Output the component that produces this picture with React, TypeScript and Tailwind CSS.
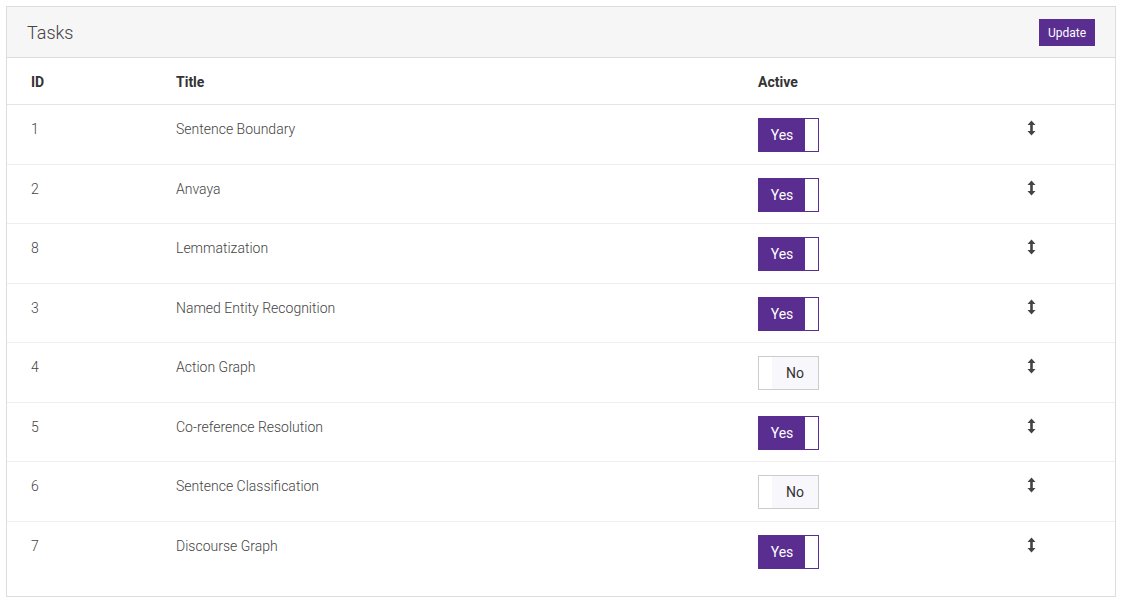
import { useState } from 'react';

const initialTasks = [
  { id: 1, title: 'Sentence Boundary', active: true },
  { id: 2, title: 'Anvaya', active: true },
  { id: 8, title: 'Lemmatization', active: true },
  { id: 3, title: 'Named Entity Recognition', active: true },
  { id: 4, title: 'Action Graph', active: false },
  { id: 5, title: 'Co-reference Resolution', active: true },
  { id: 6, title: 'Sentence Classification', active: false },
  { id: 7, title: 'Discourse Graph', active: true },
];

const ArrowsV = () => (
  <svg width="9" height="16" viewBox="0 0 9 16" className="text-[#444]">
    <path d="M4.5 0.5 L8.5 5 L5.8 5 L5.8 11 L8.5 11 L4.5 15.5 L0.5 11 L3.2 11 L3.2 5 L0.5 5 Z" fill="currentColor" />
  </svg>
);

const Toggle = ({ on, onClick }: { on: boolean; onClick: () => void }) =>
  on ? (
    <button
      onClick={onClick}
      className="flex h-[34px] w-[61px] border border-[#5a2d91] bg-[#5a2d91]"
    >
      <span className="flex h-full w-[46px] items-center justify-center pt-[1px] text-[14px] font-normal text-white">Yes</span>
      <span className="h-full flex-1 bg-white" />
    </button>
  ) : (
    <button
      onClick={onClick}
      className="flex h-[34px] w-[61px] border border-[#cccccc] bg-[#f8f8fc]"
    >
      <span className="h-full w-[13px] bg-white" />
      <span className="flex h-full flex-1 items-center justify-center pt-[1px] text-[14px] font-normal text-[#333]">No</span>
    </button>
  );

export default function App() {
  const [tasks, setTasks] = useState(initialTasks);

  const toggle = (id: number) =>
    setTasks((ts) => ts.map((t) => (t.id === id ? { ...t, active: !t.active } : t)));

  return (
    <div className="min-h-screen bg-white px-[6px] pt-[6px] pb-[5px]" style={{ fontFamily: 'Roboto, "Noto Sans", sans-serif' }}>
      <div className="border border-[#dddddd] pb-[15px]">
        <div className="flex h-[51px] items-center justify-between border-b border-[#dcdcdc] bg-[#f6f6f6] pl-[20px] pr-[20px]">
          <h2 className="text-[18px] font-light text-[#444]">Tasks</h2>
          <button className="h-[27px] bg-[#5a2d91] px-[9px] pt-[1px] text-[12px] font-normal text-white">Update</button>
        </div>

        <div className="grid h-[47px] grid-cols-[145px_582px_269px_1fr] items-center border-b border-[#e4e4e4] pt-[2px] text-[14px] font-bold text-[#333]">
          <div className="pl-[24px]">ID</div>
          <div className="pl-[24px]">Title</div>
          <div className="pl-[24px]">Active</div>
          <div />
        </div>

        {tasks.map((t, i) => (
          <div
            key={t.id}
            className={`grid h-[59.5px] grid-cols-[145px_582px_269px_1fr] items-start text-[14px] font-light text-[#444] ${
              i < tasks.length - 1 ? 'border-b border-[#eeeeee]' : ''
            }`}
          >
            <div className="pl-[24px] pt-[14px]">{t.id}</div>
            <div className="pl-[24px] pt-[14px]">{t.title}</div>
            <div className="pl-[24px] pt-[13px]">
              <Toggle on={t.active} onClick={() => toggle(t.id)} />
            </div>
            <div className="pl-[24px] pt-[15px]">
              <ArrowsV />
            </div>
          </div>
        ))}
      </div>
    </div>
  );
}
